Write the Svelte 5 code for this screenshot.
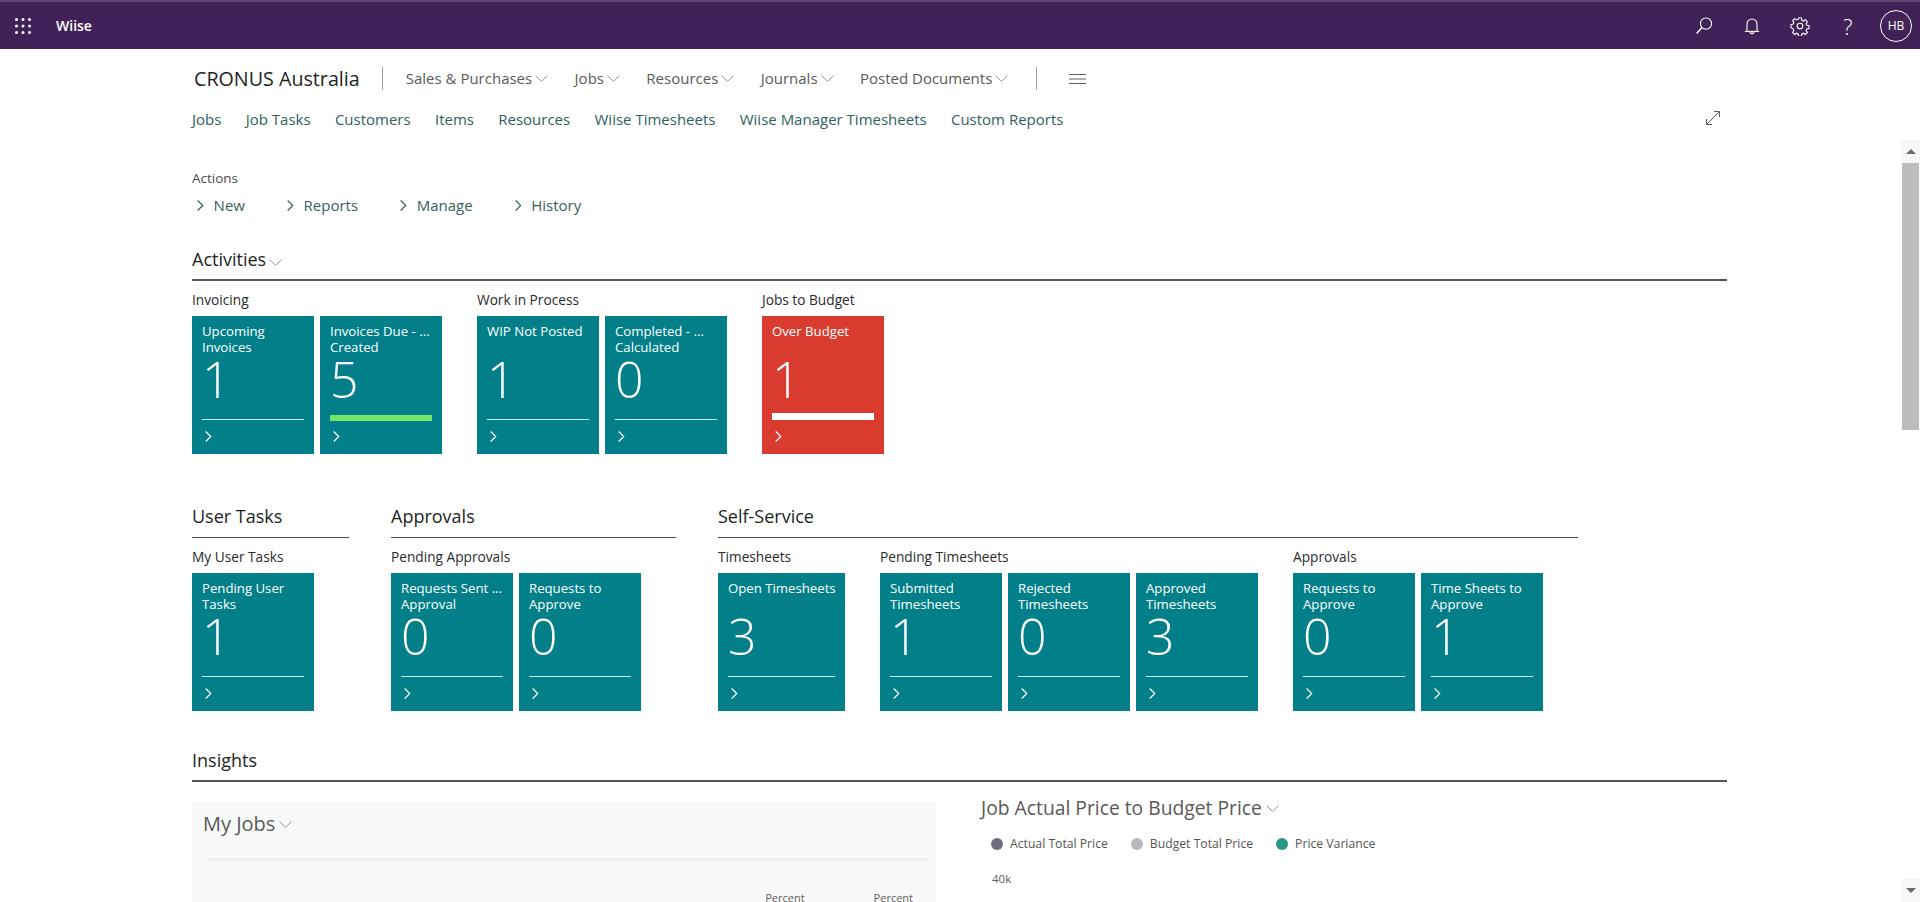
<script lang="ts">
  interface Tile {
    lines: string[];
    value: number;
    bar?: 'good' | 'bad';
    wide?: boolean;
  }
  interface Group {
    caption: string;
    tiles: Tile[];
  }

  const menus = ['Sales & Purchases', 'Jobs', 'Resources', 'Journals', 'Posted Documents'];
  const links = ['Jobs', 'Job Tasks', 'Customers', 'Items', 'Resources', 'Wiise Timesheets', 'Wiise Manager Timesheets', 'Custom Reports'];
  const actions = ['New', 'Reports', 'Manage', 'History'];

  const activities: Group[] = [
    { caption: 'Invoicing', tiles: [
      { lines: ['Upcoming', 'Invoices'], value: 1 },
      { lines: ['Invoices Due - ...', 'Created'], value: 5, bar: 'good' }
    ] },
    { caption: 'Work in Process', tiles: [
      { lines: ['WIP Not Posted'], value: 1 },
      { lines: ['Completed - ...', 'Calculated'], value: 0 }
    ] },
    { caption: 'Jobs to Budget', tiles: [
      { lines: ['Over Budget'], value: 1, bar: 'bad' }
    ] }
  ];

  const sections: { title: string; groups: Group[] }[] = [
    { title: 'User Tasks', groups: [
      { caption: 'My User Tasks', tiles: [{ lines: ['Pending User', 'Tasks'], value: 1 }] }
    ] },
    { title: 'Approvals', groups: [
      { caption: 'Pending Approvals', tiles: [
        { lines: ['Requests Sent ...', 'Approval'], value: 0 },
        { lines: ['Requests to', 'Approve'], value: 0 }
      ] }
    ] },
    { title: 'Self-Service', groups: [
      { caption: 'Timesheets', tiles: [{ lines: ['Open Timesheets'], value: 3, wide: true }] },
      { caption: 'Pending Timesheets', tiles: [
        { lines: ['Submitted', 'Timesheets'], value: 1 },
        { lines: ['Rejected', 'Timesheets'], value: 0 },
        { lines: ['Approved', 'Timesheets'], value: 3 }
      ] },
      { caption: 'Approvals', tiles: [
        { lines: ['Requests to', 'Approve'], value: 0 },
        { lines: ['Time Sheets to', 'Approve'], value: 1 }
      ] }
    ] }
  ];

  const legend = [
    { label: 'Actual Total Price', color: '#6f6d80' },
    { label: 'Budget Total Price', color: '#b9b9bb' },
    { label: 'Price Variance', color: '#2a9787' }
  ];
</script>

{#snippet caret()}
  <svg class="caret" width="13" height="7" viewBox="0 0 13 7" fill="none" stroke="currentColor" stroke-width="1">
    <path d="M.5.5l6 6 6-6" />
  </svg>
{/snippet}

{#snippet chevron(size = 10)}
  <svg width={size * 0.6} height={size} viewBox="0 0 6 10" fill="none" stroke="currentColor" stroke-width="1.1">
    <path d="M.6.5L5.2 5 .6 9.5" />
  </svg>
{/snippet}

{#snippet tileGroup(group: Group)}
  <div class="group">
    <div class="caption">{group.caption}</div>
    <div class="tiles">
      {#each group.tiles as tile}
        <div class="tile" class:wide={tile.wide} class:red={tile.bar === 'bad'}>
          <div class="tile-title">
            {#each tile.lines as line}<div>{line}</div>{/each}
          </div>
          <div class="tile-value">{tile.value}</div>
          <div class="tile-rule {tile.bar ?? ''}"></div>
          <div class="tile-chevron">{@render chevron(11)}</div>
        </div>
      {/each}
    </div>
  </div>
{/snippet}

<div class="page">
  <header class="topbar">
    <svg class="waffle" width="16" height="16" viewBox="0 0 16 16" fill="#fff">
      {#each [1.5, 8, 14.5] as y}
        {#each [1.5, 8, 14.5] as x}
          <circle cx={x} cy={y} r="1.5" />
        {/each}
      {/each}
    </svg>
    <span class="brand">Wiise</span>
    <div class="top-icons">
      <svg width="20" height="20" viewBox="0 0 20 20" fill="none" stroke="#fff" stroke-width="1.1">
        <circle cx="12" cy="7.6" r="5.6" />
        <path d="M8 11.6L2.6 17.6" stroke-width="1.5" />
      </svg>
      <svg width="20" height="20" viewBox="0 0 20 20" fill="none" stroke="#fff" stroke-width="1.1">
        <path d="M5 15V8a5 5 0 0 1 10 0v7" />
        <path d="M2.8 15.4h14.4" />
        <path d="M8 15.6a2 2 0 0 0 4 0" />
      </svg>
      <svg width="20" height="20" viewBox="0 0 20 20" fill="none" stroke="#fff" stroke-width="1.1">
        <circle cx="10" cy="10" r="2.8" />
        <path d="M8.6 2h2.8l.5 2.3 1.5.7 2-1.3 2 2-1.3 2 .7 1.5 2.2.5v2.8l-2.2.5-.7 1.5 1.3 2-2 2-2-1.3-1.5.7-.5 2.3H8.6l-.5-2.3-1.5-.7-2 1.3-2-2 1.3-2-.7-1.5L1 11.4V8.6l2.2-.5.7-1.5-1.3-2 2-2 2 1.3 1.5-.7z" />
      </svg>
      <span class="help">?</span>
      <span class="avatar">HB</span>
    </div>
  </header>

  <div class="titlebar">
    <span class="company">CRONUS Australia</span>
    <span class="divider"></span>
    <nav class="menus">
      {#each menus as menu}
        <span class="menu">{menu}{@render caret()}</span>
      {/each}
    </nav>
    <span class="divider second"></span>
    <svg class="hamburger" width="17" height="10" viewBox="0 0 17 10" stroke="#605e5c" stroke-width="1">
      <path d="M0 .5h17M0 5h17M0 9.5h17" />
    </svg>
  </div>

  <div class="linkbar">
    <nav class="links">
      {#each links as link}<span>{link}</span>{/each}
    </nav>
    <svg class="expand" width="16" height="16" viewBox="0 0 16 16" fill="none" stroke="#605e5c" stroke-width="1">
      <path d="M1.5 14.5L14.5 1.5M9 1.5h5.5V7M1.5 9v5.5H7" />
    </svg>
  </div>

  <div class="body">
    <main class="content">
      <div class="actions-label">Actions</div>
      <div class="actions">
        {#each actions as action}
          <span class="action">{@render chevron(11)}{action}</span>
        {/each}
      </div>

      <h2 class="part-title thick">Activities{@render caret()}</h2>
      <div class="groups">
        {#each activities as group}
          {@render tileGroup(group)}
        {/each}
      </div>

      <div class="sections">
        {#each sections as section}
          <section>
            <h2 class="part-title">{section.title}</h2>
            <div class="groups">
              {#each section.groups as group}
                {@render tileGroup(group)}
              {/each}
            </div>
          </section>
        {/each}
      </div>

      <h2 class="part-title thick insights-title">Insights</h2>
      <div class="insights">
        <div class="jobs-panel">
          <div class="panel-title">My Jobs{@render caret()}</div>
          <div class="panel-rule"></div>
          <div class="panel-head">
            <span>Percent</span>
            <span>Percent</span>
          </div>
        </div>
        <div class="chart">
          <div class="panel-title chart-title">Job Actual Price to Budget Price{@render caret()}</div>
          <div class="legend">
            {#each legend as item}
              <span class="legend-item"><i style="background: {item.color}"></i>{item.label}</span>
            {/each}
          </div>
          <div class="axis">40k</div>
        </div>
      </div>
    </main>

    <div class="scrollbar">
      <div class="scroll-btn"><span class="up"></span></div>
      <div class="thumb"></div>
      <div class="track"></div>
      <div class="scroll-btn"><span class="down"></span></div>
    </div>
  </div>
</div>

<style>
  :global(body) {
    margin: 0;
    background: #fff;
    font-family: 'Open Sans', 'Liberation Sans', sans-serif;
  }

  .page {
    height: 902px;
    display: flex;
    flex-direction: column;
    overflow: hidden;
    color: #252423;
  }

  .topbar {
    height: 49px;
    flex-shrink: 0;
    box-sizing: border-box;
    display: flex;
    align-items: center;
    padding: 0 8px 0 15px;
    background: #412258;
    border-top: 2px solid #634578;
    color: #fff;
  }

  .waffle {
    margin-right: 25px;
  }

  .brand {
    font-size: 14px;
    font-weight: 600;
  }

  .top-icons {
    margin-left: auto;
    display: flex;
    align-items: center;
    gap: 28px;
  }

  .help {
    width: 20px;
    text-align: center;
    font-size: 22px;
    font-weight: 300;
    line-height: 20px;
  }

  .avatar {
    width: 32px;
    height: 32px;
    box-sizing: border-box;
    margin-left: -6px;
    border: 1px solid #fff;
    border-radius: 50%;
    display: flex;
    align-items: center;
    justify-content: center;
    font-size: 12px;
  }

  .titlebar {
    height: 58px;
    flex-shrink: 0;
    display: flex;
    align-items: center;
    padding-left: 194px;
  }

  .company {
    font-size: 19.7px;
    font-weight: 500;
    color: #201f1e;
  }

  .divider {
    width: 1px;
    height: 23px;
    margin: 0 23px 0 22px;
    background: #a19f9d;
  }

  .divider.second {
    margin: 0 32px 0 28px;
  }

  .menus {
    display: flex;
    gap: 26.4px;
  }

  .menu {
    display: flex;
    align-items: center;
    font-size: 15px;
    color: #5b5a59;
  }

  .caret {
    margin: 1px 0 0 3px;
    color: #9a9896;
  }

  .hamburger {
    margin-top: 1px;
  }

  .linkbar {
    height: 26px;
    box-sizing: border-box;
    flex-shrink: 0;
    display: flex;
    align-items: center;
    justify-content: space-between;
    padding: 0 199px 2px 192px;
  }

  .links {
    display: flex;
    gap: 24.3px;
    font-size: 15px;
    color: #31605f;
  }

  .expand {
    margin-top: -2px;
  }

  .body {
    flex: 1;
    min-height: 0;
    margin-top: 7px;
    display: flex;
  }

  .content {
    flex: 1;
    min-width: 0;
    padding: 29px 174px 0 192px;
    overflow: hidden;
  }

  .actions-label {
    font-size: 13.5px;
    line-height: 18px;
    color: #4b4a49;
  }

  .actions {
    display: flex;
    gap: 42px;
    margin: 8px 0 0 5px;
  }

  .action {
    display: flex;
    align-items: center;
    gap: 10px;
    font-size: 15px;
    line-height: 20px;
    color: #37605f;
  }

  .part-title {
    margin: 0;
    padding-bottom: 9px;
    border-bottom: 1px solid #4a4a4a;
    font-size: 18px;
    font-weight: 500;
    line-height: 24px;
    color: #201f1e;
  }

  .part-title.thick {
    margin-top: 32px;
    padding-bottom: 8px;
    border-bottom-width: 2px;
    border-bottom-color: #555;
  }

  .insights-title {
    margin-top: 37px !important;
  }

  .groups {
    display: flex;
  }

  .group {
    margin-right: 35px;
  }

  .caption {
    margin: 10px 0 7px;
    font-size: 13.7px;
    font-weight: 500;
    line-height: 18px;
    color: #2b2a29;
  }

  .tiles {
    display: flex;
    gap: 6px;
  }

  .tile {
    width: 122px;
    height: 138px;
    box-sizing: border-box;
    padding: 7px 10px 0;
    display: flex;
    flex-direction: column;
    background: #027f88;
    color: #fff;
  }

  .tile.wide {
    width: 127px;
  }

  .tile.red {
    background: #d93c2f;
  }

  .tile-title {
    height: 33px;
    flex-shrink: 0;
    font-size: 13.2px;
    line-height: 16px;
    white-space: nowrap;
  }

  .tile-value {
    height: 46px;
    flex-shrink: 0;
    font-size: 50px;
    font-weight: 300;
    line-height: 46px;
  }

  .tile-rule {
    height: 1px;
    flex-shrink: 0;
    margin-top: 17px;
    background: #c9f3f3;
  }

  .tile-rule.good {
    height: 6px;
    margin-top: 13px;
    background: #74e366;
  }

  .tile-rule.bad {
    height: 7px;
    margin-top: 11px;
    background: #fff;
  }

  .tile-chevron {
    margin: auto 0 0 3px;
    padding-bottom: 12px;
    line-height: 0;
  }

  .sections {
    display: flex;
    gap: 42px;
    margin-top: 50px;
  }

  .insights {
    display: flex;
    gap: 45px;
  }

  .jobs-panel {
    width: 744px;
    height: 120px;
    box-sizing: border-box;
    margin-top: 20px;
    padding: 8px 7px 0 11px;
    background: #f8f9f9;
  }

  .panel-title {
    display: flex;
    align-items: center;
    font-size: 20px;
    line-height: 28px;
    color: #5a5958;
  }

  .panel-title .caret {
    margin-left: 4px;
  }

  .panel-rule {
    height: 3px;
    margin: 20px 0 0 4px;
    background: #eef0ef;
  }

  .panel-head {
    display: flex;
    justify-content: flex-end;
    gap: 69px;
    margin: 30px 16px 0 0;
    font-size: 11px;
    line-height: 14px;
    color: #605e5c;
  }

  .chart {
    padding-top: 12px;
  }

  .chart-title {
    font-size: 19.3px;
  }

  .legend {
    display: flex;
    gap: 23px;
    margin: 14px 0 0 10px;
  }

  .legend-item {
    display: flex;
    align-items: center;
    gap: 7px;
    font-size: 12.2px;
    line-height: 16px;
    color: #555;
  }

  .legend-item i {
    width: 12px;
    height: 12px;
    border-radius: 50%;
  }

  .axis {
    margin: 19px 0 0 11px;
    font-size: 11.5px;
    line-height: 16px;
    color: #605e5c;
  }

  .scrollbar {
    width: 19px;
    flex-shrink: 0;
    display: flex;
    flex-direction: column;
    align-items: center;
  }

  .scroll-btn {
    height: 23px;
    width: 100%;
    flex-shrink: 0;
    display: flex;
    align-items: center;
    justify-content: center;
    background: #f7f7f7;
  }

  .thumb {
    width: 17px;
    height: 267px;
    flex-shrink: 0;
    background: #bdbdbd;
  }

  .track {
    flex: 1;
    width: 100%;
  }

  .up,
  .down {
    width: 0;
    height: 0;
    border-left: 5px solid transparent;
    border-right: 5px solid transparent;
  }

  .up {
    border-bottom: 5px solid #6a6a6a;
  }

  .down {
    border-top: 5px solid #6a6a6a;
  }
</style>
